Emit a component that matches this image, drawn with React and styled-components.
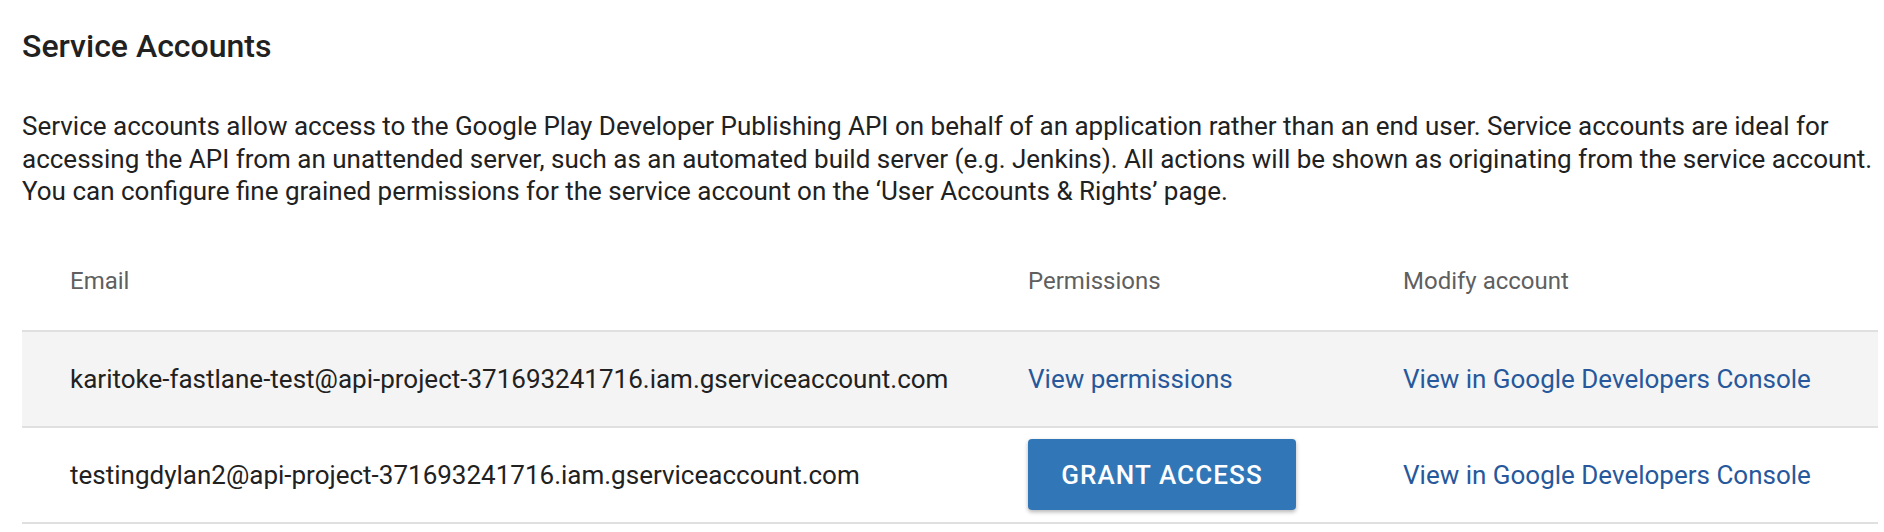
import React from "react";
import styled, { createGlobalStyle } from "styled-components";

const GlobalStyle = createGlobalStyle`
    html, body {
        margin: 0;
        padding: 0;
        background: #fff;
    }
    body {
        font-family: Roboto, "Liberation Sans", Arial, sans-serif;
        color: #212121;
    }
`;

const Page = styled.div`
    padding: 22px 6px 0 22px;
`;

const Title = styled.h1`
    margin: 0;
    font-size: 32px;
    line-height: 49px;
    font-weight: 500;
    color: #212121;
`;

const Intro = styled.p`
    margin: 39px 0 25px;
    font-size: 26px;
    line-height: 32.5px;
    font-weight: 400;
`;

const Table = styled.div`
    display: grid;
    grid-template-columns: 1006px 375px 1fr;
`;

const Row = styled.div`
    display: contents;
    > * {
        height: ${(p) => (p.$head ? "97px" : "94px")};
        background: ${(p) => (p.$shaded ? "#f4f4f4" : "transparent")};
        border-bottom: 2px solid #e0e0e0;
    }
`;

const Cell = styled.div`
    display: flex;
    align-items: center;
    padding-left: ${(p) => (p.$first ? "48px" : "0")};
    font-size: ${(p) => (p.$head ? "24px" : "26px")};
    color: ${(p) => (p.$head ? "#5f5f5f" : "#212121")};
`;

const Link = styled.a`
    color: #26589b;
    text-decoration: none;
    cursor: pointer;
`;

const Button = styled.button`
    width: 268px;
    height: 71px;
    border: none;
    border-radius: 4px;
    background: #3177b8;
    color: #fff;
    font-family: inherit;
    font-size: 26px;
    font-weight: 500;
    letter-spacing: 1.1px;
    box-shadow: 0 2px 4px rgba(0, 0, 0, 0.3);
    cursor: pointer;
`;

const accounts = [
    {
        email: "karitoke-fastlane-test@api-project-371693241716.iam.gserviceaccount.com",
        granted: true,
    },
    {
        email: "testingdylan2@api-project-371693241716.iam.gserviceaccount.com",
        granted: false,
    },
];

export default function App() {
    return (
        <Page>
            <GlobalStyle />
            <Title>Service Accounts</Title>
            <Intro>
                Service accounts allow access to the Google Play Developer Publishing API on behalf of an
                application rather than an end user. Service accounts are ideal for accessing the API from an
                unattended server, such as an automated build server (e.g. Jenkins). All actions will be shown as
                originating from the service account. You can configure fine grained permissions for the service
                account on the ‘User Accounts &amp; Rights’ page.
            </Intro>
            <Table>
                <Row $head>
                    <Cell $head $first>Email</Cell>
                    <Cell $head>Permissions</Cell>
                    <Cell $head>Modify account</Cell>
                </Row>
                {accounts.map((a, i) => (
                    <Row key={a.email} $shaded={i % 2 === 0}>
                        <Cell $first>{a.email}</Cell>
                        <Cell>
                            {a.granted ? <Link>View permissions</Link> : <Button>GRANT ACCESS</Button>}
                        </Cell>
                        <Cell>
                            <Link>View in Google Developers Console</Link>
                        </Cell>
                    </Row>
                ))}
            </Table>
        </Page>
    );
}
